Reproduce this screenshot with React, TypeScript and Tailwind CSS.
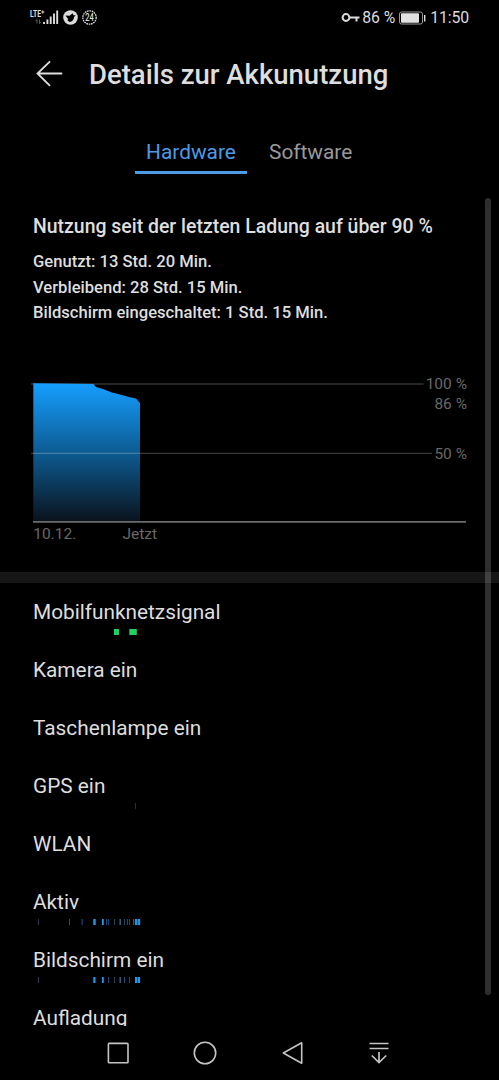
import React from 'react';

interface Mark {
  x: number;
  width: number;
  color: string;
}

interface UsageRow {
  label: string;
  marks: Mark[];
}

const GREEN = '#1fcf62';
const BLUE = '#2196ea';
const MID = '#1b4a75';
const DIM = '#2b3f52';

const rows: UsageRow[] = [
  {
    label: 'Mobilfunknetzsignal',
    marks: [
      { x: 81, width: 5, color: GREEN },
      { x: 96.3, width: 7.5, color: GREEN },
    ],
  },
  { label: 'Kamera ein', marks: [] },
  { label: 'Taschenlampe ein', marks: [] },
  { label: 'GPS ein', marks: [{ x: 102, width: 1, color: '#1f3040' }] },
  { label: 'WLAN', marks: [] },
  {
    label: 'Aktiv',
    marks: [
      { x: 5, width: 1, color: DIM },
      { x: 36, width: 1, color: '#3c4650' },
      { x: 48.5, width: 1.2, color: MID },
      { x: 60.3, width: 2.4, color: BLUE },
      { x: 69, width: 1.8, color: BLUE },
      { x: 73, width: 1, color: MID },
      { x: 75, width: 1, color: MID },
      { x: 81, width: 1, color: DIM },
      { x: 86.5, width: 1.4, color: '#4a6078' },
      { x: 91, width: 1, color: MID },
      { x: 94, width: 1, color: MID },
      { x: 96, width: 1, color: MID },
      { x: 100, width: 1.2, color: '#1d6098' },
      { x: 102, width: 2.3, color: BLUE },
      { x: 104.7, width: 2.4, color: BLUE },
    ],
  },
  {
    label: 'Bildschirm ein',
    marks: [
      { x: 5, width: 1, color: DIM },
      { x: 60.3, width: 2.2, color: BLUE },
      { x: 69, width: 1.8, color: BLUE },
      { x: 75, width: 1, color: MID },
      { x: 81, width: 1, color: DIM },
      { x: 86.5, width: 1.4, color: '#4a6078' },
      { x: 91, width: 1, color: MID },
      { x: 96, width: 1, color: MID },
      { x: 102, width: 2.3, color: BLUE },
      { x: 104.7, width: 2.4, color: BLUE },
    ],
  },
  { label: 'Aufladung', marks: [] },
];

const StatusBar: React.FC = () => (
  <div className="flex h-9 shrink-0 items-center justify-between pr-[30px] pl-[29px] text-[#dcdcdc]">
    <svg width="70" height="24" viewBox="0 0 70 24">
      <text x="1" y="11.3" fontSize="9.5" fontWeight="700" fill="currentColor" textLength="11" lengthAdjust="spacingAndGlyphs">LTE</text>
      <path d="M12.3 6h3M13.8 4.5v3" stroke="currentColor" strokeWidth="1" />
      <path d="M8 13.5v4M6.8 15l1.2-1.5M10.5 13.5v4M11.7 16l-1.2 1.5" stroke="#666" strokeWidth="0.9" fill="none" />
      <path d="M15 16v2M18.4 13.5v4.5M21.7 10.5v7.5M25 7.5v10.5M28.2 4.5v13.5" stroke="currentColor" strokeWidth="1.9" />
      <circle cx="41.5" cy="11.5" r="7.3" fill="currentColor" />
      <path d="M36.5 9.5l4 .3 3.3-2.6.6 2 2.4.1-1.8 1.8c0 3-2.2 5-4.3 4.9l-2.2-1.5.6-1.6z" fill="#000" />
      <circle cx="60.5" cy="11.5" r="6.7" fill="none" stroke="currentColor" strokeWidth="1.3" strokeDasharray="1.7 0.7" />
      <text x="56.3" y="15" fontSize="10" fontWeight="500" fill="currentColor" textLength="8.6" lengthAdjust="spacingAndGlyphs">24</text>
    </svg>
    <div className="flex items-center text-[15.8px] leading-5">
      <svg width="19" height="12" viewBox="0 0 19 12" fill="none" stroke="currentColor" strokeWidth="2">
        <circle cx="5" cy="5.5" r="3.4" />
        <path d="M8.4 5.5H18.5M15.5 5.5V9.5" />
      </svg>
      <span className="ml-[2px] tracking-[-0.1px]">86 %</span>
      <svg className="ml-[4px]" width="27" height="14" viewBox="0 0 27 14">
        <rect x="0.5" y="1" width="23" height="12" rx="2" fill="none" stroke="#999" strokeWidth="1" />
        <rect x="2" y="2.3" width="18" height="9.4" rx="0.8" fill="#e2e2e2" />
        <path d="M25.7 4v6.5" stroke="currentColor" strokeWidth="1.4" />
      </svg>
      <span className="ml-[4px] tracking-[-0.1px]">11:50</span>
    </div>
  </div>
);

const BatteryChart: React.FC = () => (
  <svg className="block text-[15.5px]" width="499" height="180" viewBox="0 0 499 180" fill="#686868">
    <defs>
      <linearGradient id="level" x1="0" y1="0" x2="0" y2="1">
        <stop offset="0" stopColor="#159eff" />
        <stop offset="0.5" stopColor="#0d5c93" />
        <stop offset="1" stopColor="#0a131d" />
      </linearGradient>
    </defs>
    <path d="M31 14H423.5" stroke="#333" strokeWidth="1.3" />
    <path d="M33.3 13.2L93.5 14L96 17L103 19L112 22.5L120 24.5L129 27L136 28.5L140 33V151H33.3z" fill="url(#level)" />
    <path d="M31 83.3H432" stroke="#fff" strokeOpacity="0.23" strokeWidth="1.2" />
    <path d="M33 151.8H466" stroke="#6b6b6b" strokeWidth="1.7" />
    <text x="467" y="19.4" textAnchor="end">100 %</text>
    <text x="467" y="39.1" textAnchor="end">86 %</text>
    <text x="467" y="88.9" textAnchor="end">50 %</text>
    <text x="33.3" y="169.4">10.12.</text>
    <text x="122.5" y="169.4">Jetzt</text>
  </svg>
);

const UsageItem: React.FC<{ row: UsageRow }> = ({ row }) => (
  <div className="h-[58px] px-[33px] pt-4">
    <p className="text-[20.8px] leading-[26px]">{row.label}</p>
    <svg className="mt-[4.4px] block" width="433" height="6" viewBox="0 0 433 6">
      {row.marks.map((mark) => (
        <rect key={mark.x} x={mark.x} y="0" width={mark.width} height="6" fill={mark.color} />
      ))}
    </svg>
  </div>
);

const NavBar: React.FC = () => (
  <div className="flex h-[54px] shrink-0 items-center justify-between pr-[110px] pl-[107px] text-[#c4c4c4]">
    <svg width="23" height="24" viewBox="0 0 23 24" fill="none" stroke="currentColor" strokeWidth="1.6">
      <rect x="1.4" y="2.4" width="19.6" height="19.4" rx="0.8" />
    </svg>
    <svg className="-ml-[2px]" width="24" height="24" viewBox="0 0 24 24" fill="none" stroke="currentColor" strokeWidth="1.6">
      <circle cx="12" cy="12" r="10.7" />
    </svg>
    <svg className="-ml-[1px]" width="22" height="24" viewBox="0 0 22 24" fill="none" stroke="currentColor" strokeWidth="1.6" strokeLinejoin="round">
      <path d="M19.7 1.8V22.2L1.3 12z" />
    </svg>
    <svg width="20" height="24" viewBox="0 0 20 24" fill="none" stroke="currentColor" strokeWidth="1.7">
      <path d="M.5 2.5H19.5M.5 7.5H19.5M10 11V21.5M2.8 14.5L10 21.5L17.2 14.5" />
    </svg>
  </div>
);

const App: React.FC = () => {
  return (
    <div className="relative flex h-[1080px] w-[499px] flex-col overflow-hidden bg-black font-[Roboto,sans-serif] text-[#dedede]">
      <StatusBar />

      {/* Header */}
      <div className="flex h-[76px] shrink-0 items-center pl-9">
        <svg width="27" height="26" viewBox="0 0 27 26" fill="none" stroke="currentColor" strokeWidth="1.8" strokeLinecap="round">
          <path d="M1.5 12.5H25.5M13.5 .9L1.5 12.5L13.5 24.3" />
        </svg>
        <h1 className="mt-[2px] ml-[26px] text-[27.5px] leading-8 font-medium">Details zur Akkunutzung</h1>
      </div>

      {/* Tabs */}
      <div className="flex h-[83px] shrink-0 items-start pt-6 pl-[135px] text-[20.85px] leading-8">
        <button className="flex h-[38px] w-[112px] items-start justify-center border-b-[3px] border-[#4d9be6] text-[#4d9be6]">
          Hardware
        </button>
        <button className="ml-[22px] text-[#999]">Software</button>
      </div>

      {/* Scroll area */}
      <div className="min-h-0 flex-1 overflow-hidden">
        <div className="h-[175px] pt-[19px] pl-[33px] font-medium">
          <h2 className="text-[19.45px] leading-[26px]">Nutzung seit der letzten Ladung auf über 90 %</h2>
          <div className="mt-[9px] text-[16.6px] leading-[25.5px]">
            <p>Genutzt: 13 Std. 20 Min.</p>
            <p>Verbleibend: 28 Std. 15 Min.</p>
            <p>Bildschirm eingeschaltet: 1 Std. 15 Min.</p>
          </div>
        </div>
        <BatteryChart />
        <div className="mt-[22px] h-[11px] bg-[#161616]" />
        {rows.map((row) => (
          <UsageItem key={row.label} row={row} />
        ))}
      </div>

      <NavBar />

      {/* Scrollbar */}
      <div className="absolute top-[198px] right-2 h-[797px] w-[6px] rounded-full bg-white/[0.18]" />
    </div>
  );
};

export default App;
